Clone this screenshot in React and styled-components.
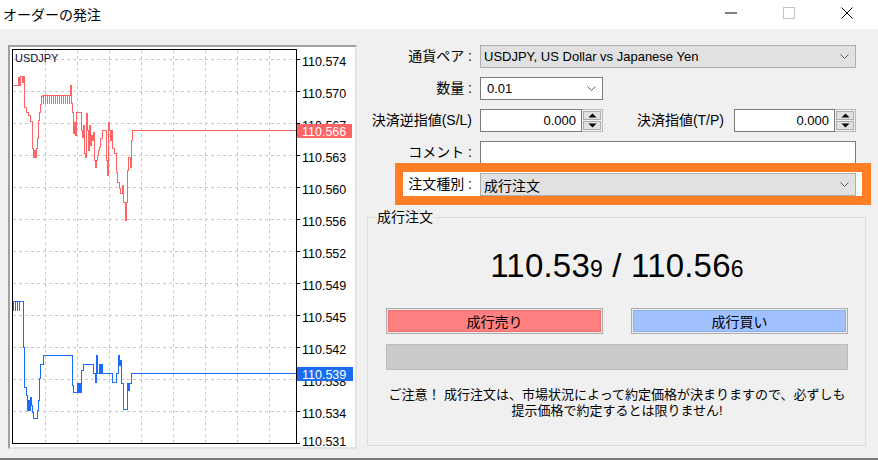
import styled, { createGlobalStyle, css } from 'styled-components';

const GlobalStyle = createGlobalStyle`
  html, body {
    margin: 0;
    padding: 0;
  }
  body {
    background: #f0f0f0;
    font-family: "Liberation Sans", "Noto Sans CJK JP", sans-serif;
    color: #000;
  }
`;

const Window = styled.div`
  width: 878px;
  height: 460px;
  box-sizing: border-box;
  background: #f0f0f0;
  border-bottom: 2px solid #7a7a7a;
  display: flex;
  flex-direction: column;
  overflow: hidden;
`;

const TitleBar = styled.div`
  height: 29px;
  flex-shrink: 0;
  background: #fff;
  display: flex;
  align-items: center;
`;

const Title = styled.div`
  flex: 1;
  padding-left: 3px;
  font-size: 14px;
  line-height: 16px;
`;

const Controls = styled.div`
  display: flex;
  align-self: stretch;
  padding-right: 2px;
`;

const ControlButton = styled.div`
  width: 58px;
  display: flex;
  justify-content: center;
  padding-top: 7px;
  box-sizing: border-box;
`;

const Body = styled.div`
  display: flex;
  padding: 16px 0 0 8px;
`;

const ChartPanel = styled.div`
  width: 349px;
  height: 404px;
  box-sizing: border-box;
  background: #fff;
  border: 2px solid;
  border-color: #a0a0a0 #e3e3e3 #e3e3e3 #a0a0a0;
  overflow: hidden;

  svg {
    display: block;
  }
`;

const Side = styled.div`
  width: 499px;
  margin-left: 10px;
  display: flex;
  flex-direction: column;
`;

const Form = styled.div`
  width: 489px;
  display: flex;
  flex-direction: column;
  gap: 9px;
`;

const Row = styled.div`
  display: flex;
  height: 23px;

  ${(p) =>
    p.$highlight &&
    css`
      position: relative;
      z-index: 0;

      &::before {
        content: '';
        position: absolute;
        z-index: -1;
        left: 28px;
        right: -15px;
        top: -10px;
        bottom: -9px;
        background: #fff;
        border: 9px solid #ff7f27;
        border-left-width: 8px;
      }
    `}
`;

const Label = styled.label`
  width: 113px;
  flex-shrink: 0;
  box-sizing: border-box;
  padding-right: 8px;
  text-align: right;
  font-size: 14px;
  line-height: 23px;
  white-space: nowrap;
`;

const SideLabel = styled(Label)`
  width: auto;
  flex: 1;
  padding-right: 10px;
`;

const Combo = styled.div`
  ${(p) => (p.$width ? `width: ${p.$width}px;` : 'flex: 1;')}
  box-sizing: border-box;
  display: flex;
  align-items: center;
  justify-content: space-between;
  padding: 0 6px 0 ${(p) => (p.$flat ? 3 : 6)}px;
  border: 1px solid ${(p) => (p.$flat ? '#adadad' : '#7a7a7a')};
  background: ${(p) => (p.$flat ? '#e1e1e1' : '#fff')};
  font-size: ${(p) => (p.$jp ? 14 : 13)}px;
  white-space: nowrap;
`;

const SpinBox = styled.div`
  width: ${(p) => p.$width}px;
  display: flex;
`;

const SpinInput = styled.div`
  flex: 1;
  box-sizing: border-box;
  border: 1px solid #7a7a7a;
  background: #fff;
  text-align: right;
  padding-right: 5px;
  font-size: 13px;
  line-height: 21px;
`;

const Spinner = styled.div`
  width: 21px;
  box-sizing: border-box;
  display: flex;
  flex-direction: column;
  gap: 1px;
  padding: 1px;
  border: 1px solid #b9b9b9;
  border-left: none;
  background: #f0f0f0;
`;

const SpinButton = styled.div`
  flex: 1;
  display: flex;
  align-items: center;
  justify-content: center;
  background: #e1e1e1;
  border: 1px solid #adadad;
`;

const TextInput = styled.div`
  flex: 1;
  box-sizing: border-box;
  height: 24px;
  border: 1px solid #7a7a7a;
  background: #fff;
`;

const Group = styled.fieldset`
  margin: 13px 0 0;
  padding: 0 17px 26px 18px;
  border: 1px solid #dcdcdc;
  min-width: 0;
`;

const Legend = styled.legend`
  margin-left: -11px;
  padding: 0 2px;
  font-size: 14px;
  line-height: 16px;
`;

const Quote = styled.div`
  padding-top: 23px;
  text-align: center;
  font-size: 33px;
  line-height: 36px;
  letter-spacing: 0.2px;
  white-space: nowrap;
`;

const Pip = styled.span`
  font-size: 23px;
`;

const Buttons = styled.div`
  display: grid;
  grid-template-columns: 1fr 1fr;
  gap: 28px;
  margin-top: 21px;
`;

const TradeButton = styled.button`
  height: 26px;
  padding: 0;
  border: 1px solid #adadad;
  background: ${(p) => p.$fill};
  box-shadow: inset 0 0 0 1px #ececec, inset 0 0 0 2px ${(p) => p.$edge};
  font-family: inherit;
  font-size: 14px;
  color: #000;
`;

const StatusBar = styled.div`
  height: 26px;
  box-sizing: border-box;
  margin-top: 10px;
  background: #cbcbcb;
  border: 1px solid #bcbcbc;
`;

const Note = styled.p`
  margin: 17px 0 0;
  text-align: center;
  font-size: 13px;
  line-height: 16px;
`;

const Chevron = () => (
  <svg width="9" height="5" viewBox="0 0 9 5">
    <polyline points="0.5,0.5 4.5,4.5 8.5,0.5" fill="none" stroke="#606060" strokeWidth="1" />
  </svg>
);

const Arrow = ({ down }) => (
  <svg width="9" height="5" viewBox="0 0 9 5">
    <polygon points={down ? '0.5,0.5 8.5,0.5 4.5,4.5' : '0.5,4.5 8.5,4.5 4.5,0.5'} fill="#000" />
  </svg>
);

const Spin = ({ width, value }) => (
  <SpinBox $width={width}>
    <SpinInput>{value}</SpinInput>
    <Spinner>
      <SpinButton><Arrow /></SpinButton>
      <SpinButton><Arrow down /></SpinButton>
    </Spinner>
  </SpinBox>
);

// price chart: page coordinates (panel content starts at 10,47)
const red = [
  [12, 85], [18, 85], [18, 77], [19, 77], [19, 85], [20, 85], [20, 76], [22, 76], [22, 82], [23, 82],
  [23, 76], [24, 76], [24, 107], [26, 107], [26, 112], [28, 112], [28, 115],
  [30, 115], [30, 121], [32, 121], [32, 148], [33, 148], [33, 157], [34, 157], [34, 150], [35, 150],
  [35, 157], [36, 157], [36, 148], [37, 148], [37, 138], [38, 138], [38, 120], [39, 120], [39, 112],
  [40, 112], [40, 104], [41, 104], [41, 96], [42, 96], [42, 95],
  [70, 95], [70, 85], [71, 85], [71, 103], [72, 103], [72, 112], [73, 112], [73, 133], [74, 133],
  [74, 122], [75, 122], [75, 135], [76, 135], [76, 112], [81, 112], [81, 130], [82, 130], [82, 137],
  [83, 137], [83, 125], [84, 125], [84, 153], [85, 153], [85, 157], [86, 157], [86, 113], [87, 113],
  [87, 130], [88, 130], [88, 150], [89, 150], [89, 125], [90, 125], [90, 145], [91, 145], [91, 135],
  [92, 135], [92, 140], [93, 140], [93, 132], [94, 132], [94, 160], [95, 160], [95, 167], [96, 167],
  [96, 160], [97, 160], [97, 155], [98, 155], [98, 150], [99, 150], [99, 147], [100, 147], [100, 138],
  [102, 138], [102, 130], [106, 130], [106, 160], [107, 160], [107, 175], [108, 175], [108, 122],
  [109, 122], [109, 130], [110, 130], [110, 140], [111, 140], [111, 130], [112, 130], [112, 148],
  [114, 148], [114, 153], [116, 153], [116, 172], [117, 172], [117, 182], [119, 182], [119, 188],
  [120, 188], [120, 193], [122, 193], [122, 185], [123, 185], [123, 202], [125, 202], [125, 220],
  [126, 220], [126, 202], [127, 202], [127, 170], [128, 170], [128, 157], [130, 157], [130, 167],
  [131, 167], [131, 140], [132, 140], [132, 130], [296, 130],
];

// combs of quick ticks (vertical teeth hanging from a level)
const comb = (xs, top, bottom) =>
  xs.map((x) => `M${x + 0.5},${top + 0.5}V${bottom + 0.5}`).join('');

const redComb = comb(Array.from({ length: 14 }, (_, i) => 43 + i * 2), 95, 103);
const blueComb = comb([13, 15, 17, 19], 301, 310);

const blue = [
  [12, 301], [23, 301],
  [23, 347], [24, 347], [24, 387], [26, 387], [26, 395], [27, 395], [27, 410], [28, 410], [28, 400],
  [29, 400], [29, 410], [30, 410], [30, 397], [31, 397], [31, 405], [32, 405], [32, 412], [33, 412],
  [33, 418], [37, 418], [37, 410], [38, 410], [38, 400], [39, 400], [39, 378], [40, 378], [40, 364],
  [43, 364], [43, 355], [72, 355], [72, 385], [73, 385], [73, 392], [77, 392], [77, 383], [78, 383],
  [78, 392], [79, 392], [79, 383], [80, 383], [80, 392], [81, 392], [81, 370], [83, 370], [83, 364],
  [93, 364], [93, 373], [95, 373], [95, 382], [96, 382], [96, 355], [97, 355], [97, 373], [99, 373],
  [99, 364], [100, 364], [100, 373], [101, 373], [101, 364], [102, 364], [102, 373], [112, 373],
  [112, 382], [116, 382], [116, 373], [118, 373], [118, 355], [119, 355], [119, 365], [120, 365],
  [120, 360], [121, 360], [121, 383], [123, 383], [123, 409], [127, 409], [127, 383], [128, 383],
  [128, 390], [129, 390], [129, 383], [131, 383], [131, 373], [296, 373],
];

const toPath = (pts) => 'M' + pts.map(([x, y]) => `${x + 0.5},${y + 0.5}`).join('L');

const levels = [
  '110.574', '110.570', '110.567', '110.563', '110.560', '110.556', '110.552',
  '110.549', '110.545', '110.542', '110.538', '110.534',
];

const Chart = () => (
  <svg width="345" height="400" viewBox="10 47 345 400" fontFamily="Liberation Sans, sans-serif" fontSize="12.5">
    {levels.map((_, i) => (
      <line key={'h' + i} x1="13" x2="296" y1={59.5 + 32 * i} y2={59.5 + 32 * i} stroke="#c8c8c8" strokeDasharray="3 3" />
    ))}
    {Array.from({ length: 8 }, (_, i) => (
      <line key={'v' + i} x1={45.5 + 32 * i} x2={45.5 + 32 * i} y1="50" y2="443" stroke="#c8c8c8" strokeDasharray="3 3" />
    ))}
    <path d={toPath(red)} fill="none" stroke="#ff6464" shapeRendering="crispEdges" />
    <path d={redComb} fill="none" stroke="#ff6464" shapeRendering="crispEdges" />
    <path d={toPath(blue)} fill="none" stroke="#1a6cff" shapeRendering="crispEdges" />
    <path d={blueComb} fill="none" stroke="#1a6cff" shapeRendering="crispEdges" />
    <rect x="12.5" y="49.5" width="284" height="394" fill="none" stroke="#000" shapeRendering="crispEdges" />
    {[...levels, 'bottom'].map((_, i) => (
      <line key={'t' + i} x1="296" x2="300" y1={59.5 + 32 * i} y2={59.5 + 32 * i} stroke="#000" />
    ))}
    {levels.map((l, i) => (
      <text key={l} x="302" y={66 + 32 * i}>{l}</text>
    ))}
    <text x="302" y="446">110.531</text>
    <text x="15" y="62" fontSize="11" fill="#0a0a32">USDJPY</text>
    <rect x="297" y="124" width="55" height="14" fill="#ff6464" />
    <text x="302" y="135.5" fill="#fff">110.566</text>
    <rect x="297" y="367" width="56" height="14" fill="#1a6cf0" />
    <text x="302" y="378.5" fill="#fff">110.539</text>
  </svg>
);

export default function App() {
  return (
    <>
      <GlobalStyle />
      <Window>
        <TitleBar>
          <Title>オーダーの発注</Title>
          <Controls>
            <ControlButton>
              <svg width="12" height="12" viewBox="0 0 12 12">
                <line x1="0" x2="12" y1="6" y2="6" stroke="#000" />
              </svg>
            </ControlButton>
            <ControlButton>
              <svg width="12" height="12" viewBox="0 0 12 12">
                <rect x="0.5" y="0.5" width="11" height="11" fill="none" stroke="#c4c4c4" />
              </svg>
            </ControlButton>
            <ControlButton>
              <svg width="12" height="12" viewBox="0 0 12 12">
                <path d="M0.5 0.5L11.5 11.5M11.5 0.5L0.5 11.5" stroke="#000" />
              </svg>
            </ControlButton>
          </Controls>
        </TitleBar>
        <Body>
          <ChartPanel>
            <Chart />
          </ChartPanel>
          <Side>
            <Form>
              <Row>
                <Label>通貨ペア :</Label>
                <Combo $flat>
                  <span>USDJPY, US Dollar vs Japanese Yen</span>
                  <Chevron />
                </Combo>
              </Row>
              <Row>
                <Label>数量 :</Label>
                <Combo $width={123}>
                  <span>0.01</span>
                  <Chevron />
                </Combo>
              </Row>
              <Row>
                <Label>決済逆指値(S/L)</Label>
                <Spin width={123} value="0.000" />
                <SideLabel>決済指値(T/P)</SideLabel>
                <Spin width={122} value="0.000" />
              </Row>
              <Row>
                <Label>コメント :</Label>
                <TextInput />
              </Row>
              <Row $highlight>
                <Label>注文種別 :</Label>
                <Combo $flat $jp>
                  <span>成行注文</span>
                  <Chevron />
                </Combo>
              </Row>
            </Form>
            <Group>
              <Legend>成行注文</Legend>
              <Quote>
                110.53<Pip>9</Pip> / 110.56<Pip>6</Pip>
              </Quote>
              <Buttons>
                <TradeButton $fill="#ff8080" $edge="#f27070">成行売り</TradeButton>
                <TradeButton $fill="#a0c0ff" $edge="#8aaef5">成行買い</TradeButton>
              </Buttons>
              <StatusBar />
              <Note>
                ご注意！ 成行注文は、市場状況によって約定価格が決まりますので、必ずしも
                <br />
                提示価格で約定するとは限りません!
              </Note>
            </Group>
          </Side>
        </Body>
      </Window>
    </>
  );
}
